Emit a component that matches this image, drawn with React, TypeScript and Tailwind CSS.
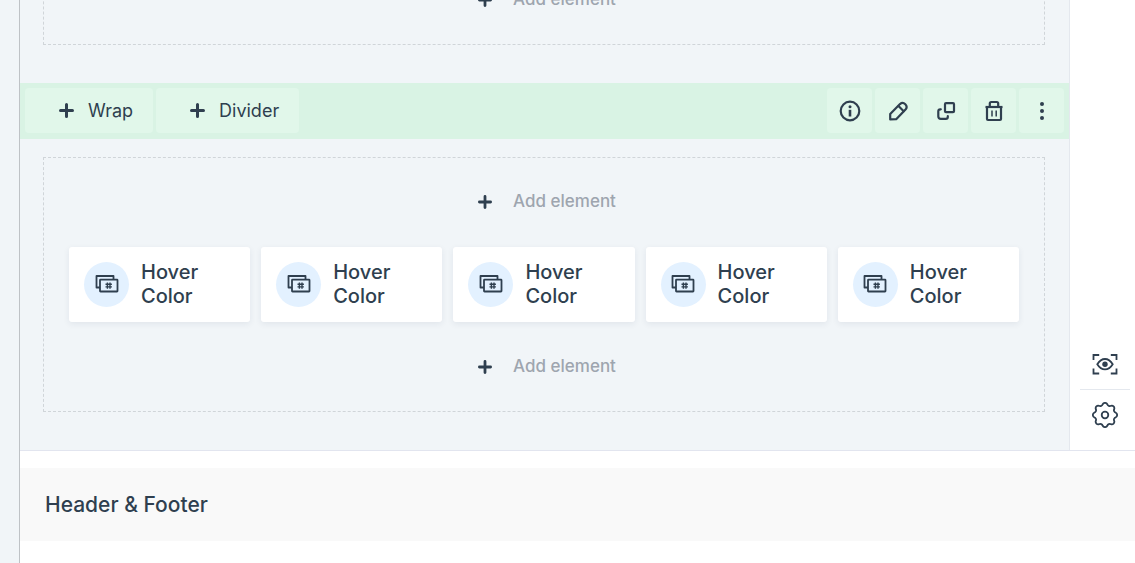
import type { ReactNode } from "react";

const ELEMENTS = ["Hover Color", "Hover Color", "Hover Color", "Hover Color", "Hover Color"];

function PlusIcon({ className = "" }: { className?: string }) {
  return (
    <svg viewBox="0 0 15 15" stroke="currentColor" strokeWidth={3} strokeLinecap="round" className={className}>
      <path d="M7.5 1.5v12M1.5 7.5h12" />
    </svg>
  );
}

function InfoIcon() {
  return (
    <svg viewBox="0 0 22 22" fill="none" stroke="currentColor" strokeWidth={2.2} className="size-[22px]">
      <circle cx="11" cy="11" r="9.3" />
      <path d="M11 9.8v6.7" strokeWidth={2.6} />
      <circle cx="11" cy="6.8" r="1.5" fill="currentColor" stroke="none" />
    </svg>
  );
}

function PencilIcon() {
  return (
    <svg
      viewBox="0 0 22 22"
      fill="none"
      stroke="currentColor"
      strokeWidth={2.2}
      strokeLinecap="round"
      strokeLinejoin="round"
      className="size-[22px]"
    >
      <path d="M3.2 19.4v-5.4l9.8-9.9a3.9 3.9 0 0 1 5.5 5.5L9.2 19.2z" />
      <path d="M11.5 6l5.2 5.2" />
    </svg>
  );
}

function CopyIcon() {
  return (
    <svg
      viewBox="0 0 22 22"
      fill="none"
      stroke="currentColor"
      strokeWidth={2.2}
      strokeLinecap="round"
      strokeLinejoin="round"
      className="size-[22px]"
    >
      <rect x="10" y="3.2" width="9" height="9" rx="1" />
      <path d="M5.8 9.3H5.2c-1.200 0-1.900.7-1.900 1.900v5c0 1.800.8 2.600 2.600 2.600h5c1.200 0 1.900-.7 1.900-1.900v-.7" />
    </svg>
  );
}

function TrashIcon() {
  return (
    <svg viewBox="0 0 22 22" fill="none" stroke="currentColor" strokeWidth={2.2} strokeLinejoin="round" className="size-[22px]">
      <path d="M2.5 7h17" />
      <path d="M4 7v12c0 .6.3 1 1 1h12c.6 0 1-.4 1-1V7" />
      <path d="M6.8 7V3.5c0-.9.5-1.500 1.400-1.500h5.600c.9 0 1.400.6 1.400 1.500V7" />
      <path d="M9 10.5v6M13.2 10.5v6" strokeWidth={1.5} />
    </svg>
  );
}

function DotsIcon() {
  return (
    <svg viewBox="0 0 22 22" fill="currentColor" className="size-[22px]">
      <circle cx="11" cy="4" r="2" />
      <circle cx="11" cy="11" r="2" />
      <circle cx="11" cy="18" r="2" />
    </svg>
  );
}

function HoverColorIcon() {
  return (
    <svg viewBox="0 0 24 18" fill="none" stroke="currentColor" strokeWidth={1.8} strokeLinejoin="round" className="h-[18px] w-6">
      <path d="M5 12.5H1.500V1h17v3.400" />
      <rect x="5" y="4.700" width="17.500" height="11.800" rx="0.500" />
      <path d="M12.400 7.400v6.400M15 7.400v6.400M10.500 9.300h6.400M10.500 11.900h6.400" strokeWidth={1.4} />
    </svg>
  );
}

function PreviewIcon() {
  return (
    <svg viewBox="0 0 26 22" fill="none" stroke="currentColor" strokeWidth={1.8} className="h-[22px] w-[26px]">
      <path d="M1.500 7V2h5.700M18.800 2h5.700v5M24.500 15.500v5h-5.700M7.200 20.500H1.500v-5" />
      <path d="M5.300 11.200c2-3.300 4.600-5.200 7.700-5.200s5.700 1.900 7.700 5.200c-2 3.300-4.600 5.200-7.700 5.200s-5.700-1.900-7.700-5.200z" />
      <circle cx="13" cy="11.200" r="2.700" fill="currentColor" stroke="none" />
    </svg>
  );
}

function GearIcon() {
  return (
    <svg viewBox="0 0 26 26" fill="none" stroke="currentColor" strokeWidth={1.8} strokeLinejoin="round" className="size-[26px]">
      <path d="M10.710 2.240A2.600 2.600 0 0 1 15.290 2.240A2.600 2.600 0 0 0 18.990 3.770A2.600 2.600 0 0 1 22.230 7.010A2.600 2.600 0 0 0 23.760 10.710A2.600 2.600 0 0 1 23.760 15.290A2.600 2.600 0 0 0 22.230 18.990A2.600 2.600 0 0 1 18.990 22.230A2.600 2.600 0 0 0 15.290 23.760A2.600 2.600 0 0 1 10.710 23.760A2.600 2.600 0 0 0 7.010 22.230A2.600 2.600 0 0 1 3.770 18.990A2.600 2.600 0 0 0 2.240 15.290A2.600 2.600 0 0 1 2.240 10.710A2.600 2.600 0 0 0 3.770 7.010A2.600 2.600 0 0 1 7.010 3.770A2.600 2.600 0 0 0 10.710 2.240z" />
      <circle cx="13" cy="13" r="3.300" />
    </svg>
  );
}

function AddElement({ className = "" }: { className?: string }) {
  return (
    <button
      type="button"
      className={`flex h-12 w-full items-center justify-center gap-[21px] pl-[6px] text-[17px] font-medium text-[#9ea5af] ${className}`}
    >
      <PlusIcon className="size-[14px] text-[#2f3f4f]" />
      Add element
    </button>
  );
}

function ToolbarAdd({ children }: { children: ReactNode }) {
  return (
    <button type="button" className="flex h-[45px] items-center gap-[14px] rounded bg-[#e1f7ea] pr-5 pl-[34px] text-[18px]">
      <PlusIcon className="size-[15px]" />
      {children}
    </button>
  );
}

function ToolbarIcon({ label, children }: { label: string; children: ReactNode }) {
  return (
    <button type="button" aria-label={label} className="flex size-[45px] items-center justify-center rounded bg-[#e1f7ea]">
      {children}
    </button>
  );
}

function ElementCard({ title }: { title: string }) {
  return (
    <div className="flex h-[75px] min-w-0 flex-1 items-center gap-3 rounded-[3px] bg-white px-[15px] pb-px shadow-[0_2px_6px_rgba(40,50,90,0.08)]">
      <span className="flex size-[45px] shrink-0 items-center justify-center rounded-full bg-[#e3f1ff]">
        <HoverColorIcon />
      </span>
      <span className="w-16 text-[20px] leading-6 font-medium">{title}</span>
    </div>
  );
}

export default function App() {
  return (
    <div className="flex min-h-screen overflow-hidden bg-[#f1f5f8] font-['Inter',sans-serif] text-[#2f3f4f]">
      <div className="w-5 shrink-0 border-r border-[#bec2c6]" />
      <main className="flex min-w-0 flex-1 flex-col bg-white">
        <div className="flex border-b border-[#e2e5ef]">
          <section className="min-w-0 flex-1 border-r border-[#e4e8ee] bg-[#f1f5f8] pb-[38px]">
            <div className="mr-6 ml-[23px] border border-t-0 border-dashed border-[#d0d5d9] pb-5">
              <AddElement className="-mt-6" />
            </div>

            <div className="mt-[38px] flex items-center justify-between bg-[#d9f3e4] px-[5px] pt-[5px] pb-[6px]">
              <div className="flex gap-[3px]">
                <ToolbarAdd>Wrap</ToolbarAdd>
                <ToolbarAdd>Divider</ToolbarAdd>
              </div>
              <div className="flex gap-[3px]">
                <ToolbarIcon label="Info">
                  <InfoIcon />
                </ToolbarIcon>
                <ToolbarIcon label="Edit">
                  <PencilIcon />
                </ToolbarIcon>
                <ToolbarIcon label="Duplicate">
                  <CopyIcon />
                </ToolbarIcon>
                <ToolbarIcon label="Delete">
                  <TrashIcon />
                </ToolbarIcon>
                <ToolbarIcon label="More">
                  <DotsIcon />
                </ToolbarIcon>
              </div>
            </div>

            <div className="mt-[18px] mr-6 ml-[23px] flex flex-col gap-[21px] border border-dashed border-[#d0d5d9] py-5">
              <AddElement />
              <div className="flex gap-[11px] px-[25px]">
                {ELEMENTS.map((title, i) => (
                  <ElementCard key={i} title={title} />
                ))}
              </div>
              <AddElement />
            </div>
          </section>

          <aside className="flex w-[65px] shrink-0 flex-col justify-end pr-[5px] pb-[10px] pl-[10px]">
            <button type="button" aria-label="Preview" className="flex h-[50px] items-center justify-center">
              <PreviewIcon />
            </button>
            <button
              type="button"
              aria-label="Settings"
              className="flex h-[51px] items-center justify-center border-t border-[#e4e8ee]"
            >
              <GearIcon />
            </button>
          </aside>
        </div>

        <h2 className="mt-[17px] flex h-[73px] items-center bg-[#f9f9f9] px-[25px] text-[21px] font-medium">
          Header &amp; Footer
        </h2>
      </main>
    </div>
  );
}
